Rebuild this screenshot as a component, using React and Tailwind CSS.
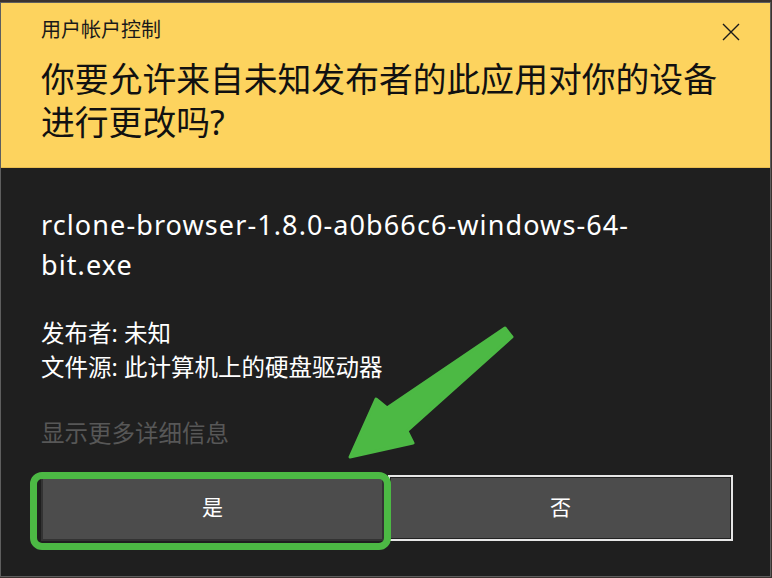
import React from 'react';

const cjk = { fontFamily: "'Noto Sans', 'Noto Sans CJK SC', sans-serif" };

// Windows UAC prompt with a callout pointing at the "Yes" button
export default function App() {
    return (
        <div className="w-[772px] h-[578px] bg-[#3b3330] overflow-hidden" style={cjk}>
            <div className="relative mt-[2px] w-[771px] h-[575px] border border-[#5e5e5e] bg-[#1f1f1f] flex flex-col">
                {/* yellow header */}
                <div className="h-[165px] bg-[#fdd35e] border-b border-[#e8bd4f] pl-[40px] pr-[28px] pt-[13px]">
                    <div className="flex items-start justify-between">
                        <p className="text-[20px] leading-[28px] text-[#1a1a1a]">用户帐户控制</p>
                        <svg width="18" height="18" viewBox="0 0 18 18" className="mt-[7px] mr-[2px]">
                            <path d="M1 1 L17 17 M17 1 L1 17" stroke="#1a1a1a" strokeWidth="1.4" fill="none" />
                        </svg>
                    </div>
                    <h1 className="mt-[14px] text-[33.8px] leading-[43px] text-[#111] font-normal">
                        你要允许来自未知发布者的此应用对你的设备<br />进行更改吗?
                    </h1>
                </div>

                {/* body */}
                <div className="flex-1 pl-[40px] pr-[37px] pt-[37px] flex flex-col text-white">
                    <p className="text-[27px] leading-[40px] tracking-[1.1px]">
                        rclone-browser-1.8.0-a0b66c6-windows-64-<br />bit.exe
                    </p>
                    <div className="mt-[31px] text-[23.5px] leading-[34px]">
                        <p>发布者: 未知</p>
                        <p>文件源: 此计算机上的硬盘驱动器</p>
                    </div>
                    <p className="mt-[32px] text-[23.5px] leading-[34px] text-[#575757]">显示更多详细信息</p>

                    <div className="mt-[25px] flex gap-[4px]">
                        <button className="w-[345px] h-[66px] bg-[#4c4c4c] border-2 border-[#333] text-[21px] text-white">是</button>
                        <button className="w-[347px] h-[66px] bg-[#4c4c4c] border-2 border-[#e6e6e6] outline outline-1 -outline-offset-[3px] outline-[#222] text-[21px] text-white">否</button>
                    </div>
                </div>

                {/* callout: box around the button and arrow */}
                <div className="absolute left-[29px] top-[469px] w-[361px] h-[78px] rounded-[12px] border-[7px] border-[#4cb944]" />
                <svg className="absolute left-0 top-0" width="771" height="575" viewBox="0 2 771 575">
                    <polygon
                        points="504,327 511,336 406,430 412,442 349,456 375,398 386,407"
                        fill="#4cb944"
                        stroke="#4cb944"
                        strokeWidth="3"
                        strokeLinejoin="round"
                    />
                </svg>
            </div>
        </div>
    );
}
